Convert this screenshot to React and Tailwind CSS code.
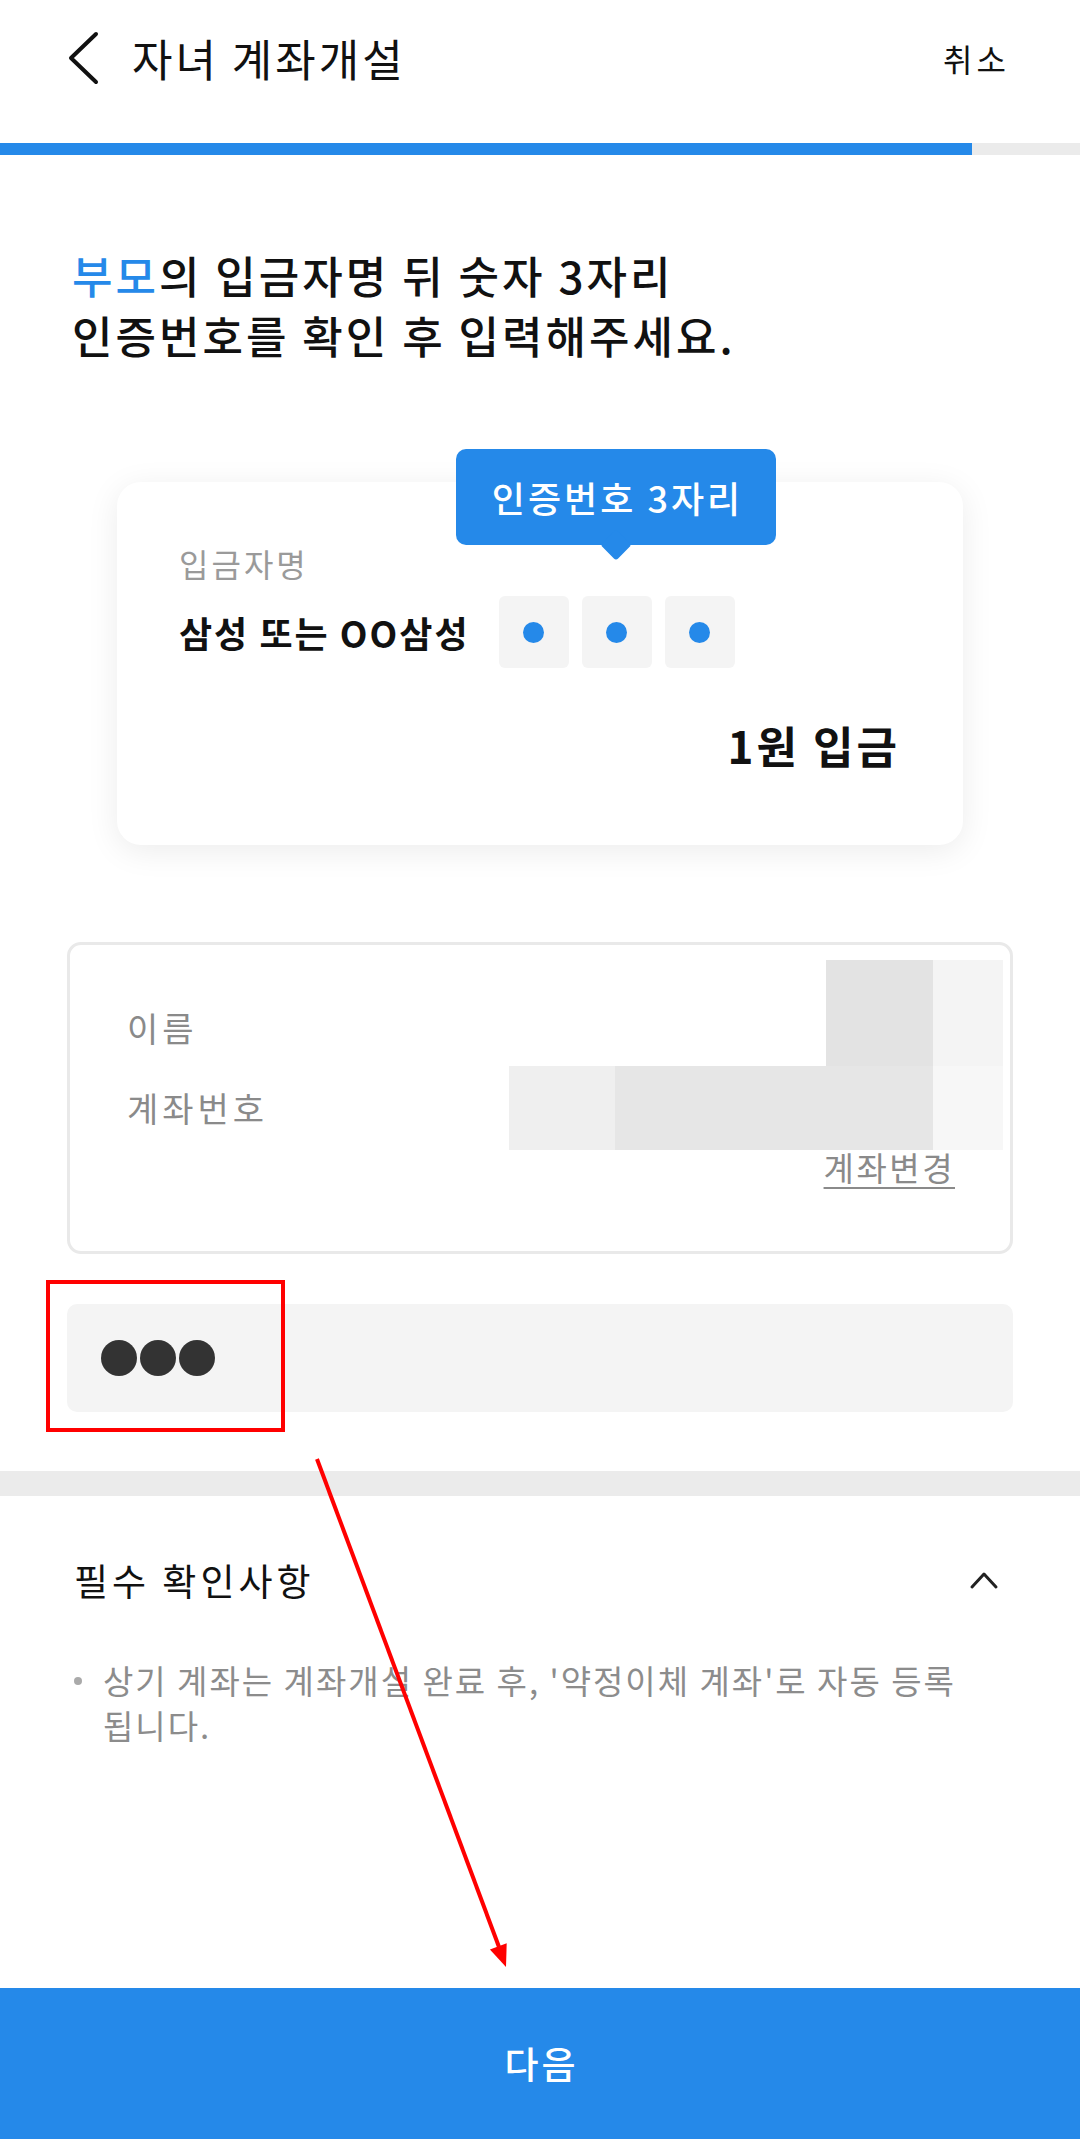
import React from 'react';

const BackIcon = () => (
  <svg width="34" height="56" viewBox="0 0 34 56" fill="none">
    <path d="M30 4 L5 28 L30 52" stroke="#111" strokeWidth="4" strokeLinecap="round" strokeLinejoin="round" />
  </svg>
);

const ChevronUp = () => (
  <svg width="30" height="20" viewBox="0 0 30 20" fill="none">
    <path d="M3 17 L15 4 L27 17" stroke="#222" strokeWidth="3" strokeLinecap="round" strokeLinejoin="round" />
  </svg>
);

// pixelated censor blocks over the account info
const mosaic = [
  { left: 756, top: 15, w: 107, h: 106, c: '#e3e3e3' },
  { left: 863, top: 15, w: 70, h: 106, c: '#f4f4f4' },
  { left: 439, top: 121, w: 106, h: 84, c: '#efefef' },
  { left: 545, top: 121, w: 318, h: 84, c: '#e6e6e6' },
  { left: 863, top: 121, w: 70, h: 84, c: '#f7f7f7' },
];

export default function App() {
  return (
    <div className="relative flex flex-col w-[1080px] min-h-[2139px] bg-white font-['Noto_Sans_CJK_KR',sans-serif] text-[#111]">
      {/* header */}
      <div className="flex items-center justify-between h-[116px] pl-[66px] pr-[70px]">
        <div className="flex items-center gap-[32px]">
          <BackIcon />
          <h1 className="text-[44px] leading-none tracking-[3px]">자녀 계좌개설</h1>
        </div>
        <button className="text-[32px] leading-none tracking-[4px]">취소</button>
      </div>

      {/* progress */}
      <div className="mt-[27px] h-[12px] bg-[#ebebeb]">
        <div className="h-full w-[972px] bg-[#2589e9]" />
      </div>

      {/* heading */}
      <div className="mt-[90px] pl-[72px] text-[44px] leading-[60px] font-medium tracking-[3px]">
        <p><span className="text-[#2589e9]">부모</span>의 입금자명 뒤 숫자 3자리</p>
        <p>인증번호를 확인 후 입력해주세요.</p>
      </div>

      {/* deposit example card */}
      <div className="relative mt-[117px] mx-[117px] h-[363px] rounded-[24px] bg-white shadow-[0_6px_32px_rgba(0,0,0,0.08)] pt-[62px] pl-[62px] pr-[63px]">
        <div className="absolute left-[339px] -top-[33px] w-[320px] h-[96px] rounded-[10px] bg-[#2589e9] flex items-center justify-center">
          <span className="relative z-10 pl-[3px] text-white text-[36px] font-medium leading-none tracking-[3px]">인증번호 3자리</span>
          <div className="absolute left-1/2 -bottom-[11px] w-[22px] h-[22px] -translate-x-1/2 rotate-45 rounded-[3px] bg-[#2589e9]" />
        </div>

        <p className="text-[32px] leading-[38px] text-[#9a9a9a] tracking-[3px]">입금자명</p>
        <div className="mt-[14px] flex items-center">
          <span className="text-[36px] font-semibold leading-none tracking-[2px]">삼성 또는 OO삼성</span>
          <div className="ml-[29px] flex gap-[13px]">
            {[0, 1, 2].map((i) => (
              <div key={i} className="w-[70px] h-[72px] rounded-[6px] bg-[#f4f4f4] flex items-center justify-center">
                <div className="w-[21px] h-[21px] rounded-full bg-[#2589e9]" />
              </div>
            ))}
          </div>
        </div>
        <p className="mt-[51px] text-right text-[44px] leading-[53px] font-bold tracking-[3px]">1원 입금</p>
      </div>

      {/* account info */}
      <div className="relative mt-[97px] mx-[67px] h-[312px] rounded-[14px] border-[3px] border-[#e9e9e9] pt-[62px] pl-[57px] pr-[55px]">
        {mosaic.map((m, i) => (
          <div
            key={i}
            className="absolute"
            style={{ left: m.left, top: m.top, width: m.w, height: m.h, background: m.c }}
          />
        ))}
        <p className="text-[34px] leading-[41px] text-[#8a8a8a] tracking-[4px]">이름</p>
        <p className="mt-[39px] text-[34px] leading-[41px] text-[#8a8a8a] tracking-[4px]">계좌번호</p>
        <p className="relative mt-[19px] text-right text-[33px] leading-[40px] text-[#8a8a8a] tracking-[2.5px]">
          <span className="underline underline-offset-[6px] decoration-[2px]">계좌변경</span>
        </p>
      </div>

      {/* code input */}
      <div className="mt-[50px] mx-[67px] h-[108px] rounded-[10px] bg-[#f4f4f4] flex items-center pl-[34px]">
        <div className="flex gap-[3px]">
          {[0, 1, 2].map((i) => (
            <div key={i} className="w-[36px] h-[36px] rounded-full bg-[#333]" />
          ))}
        </div>
      </div>

      <div className="mt-[59px] h-[25px] bg-[#ebebeb]" />

      {/* notice */}
      <div className="pt-[62px] pl-[74px] pr-[81px] flex items-center justify-between">
        <h2 className="text-[37px] leading-[44px] tracking-[4px]">필수 확인사항</h2>
        <ChevronUp />
      </div>
      <div className="mt-[56px] pl-[74px] pr-[77px] flex gap-[21px]">
        <div className="mt-[19px] w-[8px] h-[8px] shrink-0 rounded-full bg-[#aaa]" />
        <p className="text-[33px] leading-[45px] text-[#8c8c8c] tracking-[2px] break-keep">
          상기 계좌는 계좌개설 완료 후, '약정이체 계좌'로 자동 등록 됩니다.
        </p>
      </div>

      {/* next button */}
      <button className="mt-auto h-[151px] w-full bg-[#2589e9] text-white text-[37px] font-medium tracking-[3px] pl-[3px]">
        다음
      </button>

      {/* annotation overlay */}
      <svg className="absolute inset-0 pointer-events-none" width="1080" height="2139" viewBox="0 0 1080 2139" fill="none">
        <rect x="48" y="1282" width="235" height="148" stroke="#f00" strokeWidth="4" />
        <line x1="317" y1="1459" x2="499" y2="1947" stroke="#f00" strokeWidth="4" />
        <polygon points="506,1967 489.9,1949.5 506.7,1943.3" fill="#f00" />
      </svg>
    </div>
  );
}
